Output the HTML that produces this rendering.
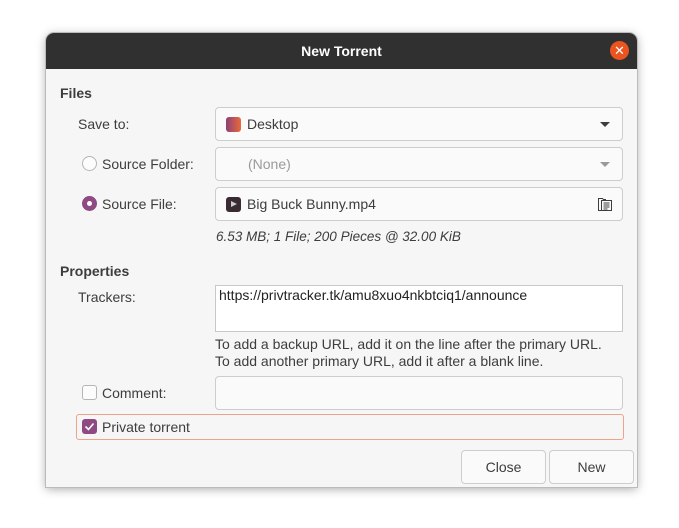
<!DOCTYPE html>
<html><head><style>
*{box-sizing:border-box;margin:0;padding:0}
body{width:679px;height:528px;background:#fff;font-family:"Liberation Sans","DejaVu Sans",sans-serif;font-size:14px;color:#3d3d3d;position:relative;overflow:hidden}
.win{position:absolute;left:46px;top:33px;width:591px;height:454px;background:#f6f6f6;border-radius:8px 8px 0 0;box-shadow:0 0 0 1px #bbb,0 2px 10px rgba(0,0,0,.35);overflow:hidden}
.tb{position:absolute;left:0;top:0;right:0;height:36px;background:#303030;color:#fff;font-weight:bold;text-align:center;line-height:36px;font-size:14px}
.x{position:absolute;right:8px;top:8px;width:19px;height:19px;border-radius:50%;background:#e95420;color:#fff;font-size:13px;line-height:19px;text-align:center;font-weight:normal}
.a{position:absolute;white-space:nowrap}
.box{position:absolute;left:169px;width:408px;border:1px solid #cdcdcd;border-radius:4px;background:#fafafa}
.b{font-weight:bold}
.radio{position:absolute;width:15px;height:15px;border-radius:50%;border:1px solid #b5b5b5;background:#fcfcfc}
.chk{position:absolute;width:15px;height:15px;border-radius:3px;border:1px solid #b5b5b5;background:#fcfcfc}
.tri{position:absolute;width:0;height:0;border-left:5px solid transparent;border-right:5px solid transparent;border-top:5px solid #3d3d3d}
.btn{position:absolute;top:417px;height:34px;border:1px solid #cdcdcd;border-radius:4px;background:#fafafa;text-align:center;line-height:32px}
</style></head><body>
<div class="win">
<div class="tb">New Torrent<div class="x">✕</div></div>
<div class="a b" style="left:14px;top:52px">Files</div>
<div class="a" style="left:32px;top:83px">Save to:</div>
<div class="box" style="top:74px;height:34px">
 <div style="position:absolute;left:10px;top:9px;width:15px;height:15px;border-radius:3px;background:linear-gradient(90deg,#8e3f77,#e96a3c)"></div>
 <div class="a" style="left:31px;top:8px">Desktop</div>
 <div class="tri" style="left:384px;top:14px"></div>
</div>
<div class="radio" style="left:36px;top:123px"></div>
<div class="a" style="left:56px;top:123px">Source Folder:</div>
<div class="box" style="top:114px;height:34px">
 <div class="a" style="left:32px;top:8px;color:#9a9a9a">(None)</div>
 <div class="tri" style="left:384px;top:14px;border-top-color:#9a9a9a"></div>
</div>
<div class="radio" style="left:36px;top:163px;background:#8f4a83;border-color:#8f4a83"><div style="position:absolute;left:4px;top:4px;width:5px;height:5px;border-radius:50%;background:#fff"></div></div>
<div class="a" style="left:56px;top:163px">Source File:</div>
<div class="box" style="top:154px;height:34px">
 <div style="position:absolute;left:10px;top:9px;width:15px;height:15px;border-radius:3px;background:#3a2b33"><div style="position:absolute;left:5px;top:4px;border-top:3.5px solid transparent;border-bottom:3.5px solid transparent;border-left:6px solid #ccc"></div></div>
 <div class="a" style="left:31px;top:8px">Big Buck Bunny.mp4</div>
 <svg style="position:absolute;left:381px;top:8px" width="16" height="16" viewBox="0 0 16 16" fill="none" stroke="#3d3d3d" stroke-width="1"><path d="M1.5 2.5h4l1 1h2v11h-7z"/><rect x="4.5" y="4.5" width="10" height="10" fill="#fafafa"/><path d="M6.5 7h6M6.5 9h6M6.5 11h6M6.5 13h4"/></svg>
</div>
<div class="a" style="left:170px;top:196px;font-style:italic;font-size:13.5px">6.53 MB; 1 File; 200 Pieces @ 32.00 KiB</div>
<div class="a b" style="left:14px;top:230px">Properties</div>
<div class="a" style="left:32px;top:256px">Trackers:</div>
<div class="box" style="top:252px;height:47px;background:#fff;border-radius:0;border-color:#c8c8c8"><div class="a" style="left:3px;top:1px;color:#222">https://privtracker.tk/amu8xuo4nkbtciq1/announce</div></div>
<div class="a" style="left:169px;top:303px;font-size:14px">To add a backup URL, add it on the line after the primary URL.</div>
<div class="a" style="left:169px;top:320px;font-size:14px">To add another primary URL, add it after a blank line.</div>
<div class="chk" style="left:36px;top:352px"></div>
<div class="a" style="left:56px;top:352px">Comment:</div>
<div class="box" style="top:343px;height:34px"></div>
<div style="position:absolute;left:30px;top:381px;width:548px;height:26px;border:1px solid #eea38a;border-radius:3px"></div>
<div class="chk" style="left:36px;top:386px;background:#8f4a83;border-color:#8f4a83"><svg width="13" height="13" viewBox="0 0 13 13" style="position:absolute;left:0;top:0"><path d="M2.5 6.5l3 3 5-6" stroke="#fff" stroke-width="1.6" fill="none"/></svg></div>
<div class="a" style="left:56px;top:386px">Private torrent</div>
<div class="btn" style="left:415px;width:85px">Close</div>
<div class="btn" style="left:503px;width:85px">New</div>
</div>
</body></html>
